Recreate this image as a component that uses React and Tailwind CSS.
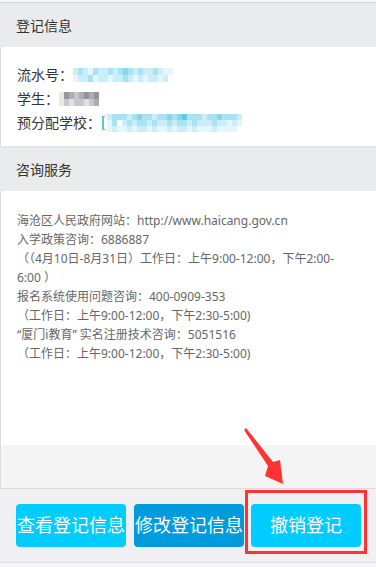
import React from "react";

const font = { fontFamily: '"Noto Sans", "Noto Sans CJK SC", sans-serif' };

function Mosaic({ colors, w = 5, h = 7, rows }) {
  return (
    <span className="inline-flex flex-col shrink-0 blur-[0.5px]">
      {rows.map((r, i) => (
        <span key={i} className="flex">
          {r.map((c, j) => (
            <span key={j} className="shrink-0" style={{ width: w, height: h, background: colors[c] }} />
          ))}
        </span>
      ))}
    </span>
  );
}

const cyan = ["#ffffff", "#e4f6fb", "#c9eef8", "#a9e3f3", "#86d7ee", "#5ccbe6"];
const gray = ["#ffffff", "#e2e0e5", "#c9c7cc", "#aeacb3", "#96939b", "#f3e6dc"];

export default function App() {
  return (
    <div className="relative w-[376px] h-[567px] bg-[#f7f7f7] overflow-hidden text-[#333]" style={font}>
      <div className="h-[2px] bg-[#f7f7f7]" />
      <div className="h-[1px] bg-[#d6d6d6]" />
      {/* Section 1 */}
      <div className="h-[44px] bg-[#eaebed] px-4 flex items-center text-[14px] text-[#333]">登记信息</div>
      <div className="h-[99px] bg-white border-l border-[#dcdcdc] px-4 pt-[16px] text-[14px] leading-[24px]">
        <div className="flex items-center">
          <span className="w-[56px]">流水号：</span>
          <Mosaic colors={cyan} rows={[[2,3,2,1,3,2,2,3,2,3,4,3,2,3,2,2,3,2,1,1], [1,2,2,3,1,2,2,1,2,2,3,2,1,2,1,2,2,1,2,0]]} />
        </div>
        <div className="flex items-center">
          <span className="w-[42px]">学生：</span>
          <Mosaic colors={gray} rows={[[5,4,3,2,3,4,3,4,0], [5,2,1,2,2,1,2,3,0]]} />
        </div>
        <div className="flex items-center">
          <span className="w-[85px]">预分配学校：</span>
          <span className="w-[3px] h-[14px] border-l-2 border-y border-[#56c8e6] mr-[2px]" />
          <Mosaic colors={cyan} h={6} rows={[[2,3,3,3,2,3,4,3,3,2,3,3,4,3,4,5,3,3,3,2,3,3,4,3,3,3,2], [1,3,0,2,3,2,3,3,2,3,2,2,3,2,3,3,2,3,2,2,2,3,2,2,1,2,1], [1,2,1,1,2,1,2,2,1,2,1,1,2,1,2,2,1,2,1,1,1,2,1,1,1,1,0]]} />
        </div>
      </div>
      <div className="h-[2px] bg-[#e4e4e4]" />
      {/* Section 2 */}
      <div className="h-[43px] bg-[#eaebed] px-4 flex items-center text-[14px] text-[#333]">咨询服务</div>
      <div className="h-[254px] bg-white border-l border-[#dcdcdc] px-4 pt-[20px] text-[12px] leading-[19px] text-[#666] whitespace-nowrap">
        <div>海沧区人民政府网站：http://www.haicang.gov.cn</div>
        <div>入学政策咨询：6886887</div>
        <div>（（4月10日-8月31日）工作日：上午9:00-12:00，下午2:00-</div>
        <div>6:00 ）</div>
        <div>报名系统使用问题咨询：400-0909-353</div>
        <div>（工作日：上午9:00-12:00，下午2:30-5:00)</div>
        <div>“厦门i教育” 实名注册技术咨询：5051516</div>
        <div>（工作日：上午9:00-12:00，下午2:30-5:00)</div>
      </div>
      <div className="h-[43px] bg-[#f4f4f5] border-l border-[#dcdcdc]" />
      <div className="h-[1px] bg-[#dcdcdc]" />
      {/* Footer */}
      <div className="h-[73px] bg-[#efeff4] flex items-center pl-4 text-[18px] text-white">
        <button className="w-[110px] h-[43px] rounded-[4px] bg-[#00ccff] flex items-center justify-center whitespace-nowrap">查看登记信息</button>
        <button className="ml-[8px] w-[110px] h-[43px] rounded-[4px] bg-[#009bdc] flex items-center justify-center whitespace-nowrap">修改登记信息</button>
        <button className="ml-[7px] w-[110px] h-[43px] rounded-[4px] bg-[#00ccff] flex items-center justify-center whitespace-nowrap">撤销登记</button>
      </div>
      <div className="h-[1px] bg-[#dcdcdc]" />
      {/* Annotation overlay */}
      <div className="absolute left-[245px] top-[490px] w-[122px] h-[64px] border-[3px] border-[#ff3333]" />
      <svg className="absolute left-0 top-0" width="376" height="567" viewBox="0 0 376 567">
        <polygon points="244,430 246,428 273,462 280,460 283,484 265,476 268,466" fill="#ff3333" />
      </svg>
    </div>
  );
}
